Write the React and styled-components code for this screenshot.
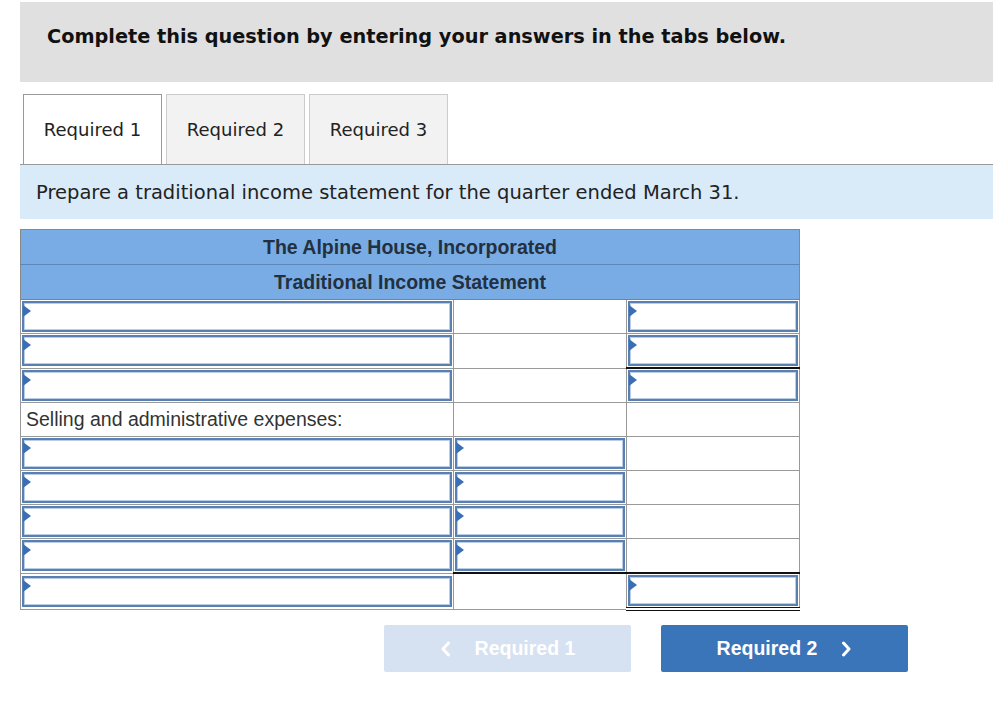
import styled, { createGlobalStyle } from 'styled-components'

const GlobalStyle = createGlobalStyle`
  html, body {
    margin: 0;
    padding: 0;
    background: #fff;
  }
  body {
    font-family: "DejaVu Sans", Verdana, sans-serif;
    color: #222;
  }
`

const Page = styled.div`
  width: 993px;
  padding-top: 2px;
  padding-left: 20px;
  box-sizing: border-box;
`

const Banner = styled.div`
  height: 80px;
  background: #e0e0e0;
  padding: 23px 0 0 27px;
  box-sizing: border-box;
  font-size: 19.3px;
  font-weight: bold;
  color: #111;
`

const TabBar = styled.div`
  display: flex;
  gap: 4px;
  margin-top: 12px;
  padding-left: 3px;
  border-bottom: 1px solid #999;
`

const Tab = styled.div`
  width: 139px;
  height: 70px;
  box-sizing: border-box;
  display: flex;
  align-items: center;
  justify-content: center;
  font-size: 18px;
  color: #222;
  border: 1px solid ${(p) => (p.$active ? '#999' : '#ccc')};
  border-bottom: none;
  background: ${(p) => (p.$active ? '#fff' : '#f2f2f2')};
  margin-bottom: ${(p) => (p.$active ? '-1px' : '0')};
`

const Prompt = styled.div`
  height: 54px;
  background: #d9ebf9;
  display: flex;
  align-items: center;
  padding-left: 16px;
  font-size: 19.5px;
  color: #222;
`

const Sheet = styled.table`
  margin-top: 10px;
  width: 779px;
  border-collapse: collapse;
  table-layout: fixed;
  font-family: "Liberation Sans", Arial, sans-serif;
  border: 1px solid #888;
`

const HeadCell = styled.th`
  background: #79ace4;
  color: #22303f;
  font-size: 19.5px;
  font-weight: bold;
  height: 34px;
  padding: 0;
  border-bottom: 1px solid #5f87b5;
  text-align: center;
`

const Cell = styled.td`
  height: 34px;
  box-sizing: border-box;
  padding: 1px;
  border: 1px solid #999;
  font-size: 19.5px;
  color: #333;
  vertical-align: middle;
  border-top: ${(p) => (p.$rule ? '2px solid #111' : '1px solid #999')};
  border-bottom: ${(p) => (p.$double ? '4px double #111' : '1px solid #999')};
`

const Label = styled.span`
  padding-left: 4px;
`

const InputWrap = styled.div`
  position: relative;
  height: 31px;
  box-sizing: border-box;
  border: 2px solid #5a80b2;
  box-shadow: inset 0 0 0 1px #b9cde6;
  background: #fff;
`

const Marker = styled.span`
  position: absolute;
  left: -1px;
  top: 2px;
  width: 0;
  height: 0;
  border-top: 6px solid transparent;
  border-bottom: 6px solid transparent;
  border-left: 8px solid #3a6fb8;
`

const Field = styled.input`
  width: 100%;
  height: 100%;
  border: none;
  outline: none;
  background: transparent;
  box-sizing: border-box;
  padding: 0 6px;
  font: inherit;
`

const Nav = styled.div`
  display: flex;
  gap: 30px;
  margin-top: 14px;
  padding-left: 364px;
`

const NavButton = styled.button`
  width: 247px;
  height: 47px;
  border: none;
  border-radius: 2px;
  background: ${(p) => (p.$disabled ? '#d6e2f1' : '#3a75ba')};
  color: #fff;
  font-family: "Liberation Sans", Arial, sans-serif;
  font-size: 19.5px;
  font-weight: bold;
  display: flex;
  align-items: center;
  justify-content: center;
  gap: 24px;
  cursor: ${(p) => (p.$disabled ? 'default' : 'pointer')};
`

function Chevron({ dir }) {
  const d = dir === 'left' ? 'M8.5 2 L3 8 L8.5 14' : 'M2.5 2 L8 8 L2.5 14'
  return (
    <svg width="11" height="16" viewBox="0 0 11 16">
      <path d={d} fill="none" stroke="#fff" strokeWidth="3" strokeLinecap="round" strokeLinejoin="round" />
    </svg>
  )
}

function Input() {
  return (
    <InputWrap>
      <Marker />
      <Field />
    </InputWrap>
  )
}

// which columns hold an input on each row
const rows = [
  { cols: [1, 0, 1] },
  { cols: [1, 0, 1] },
  { cols: [1, 0, 1], rule: [false, false, true] },
  { label: 'Selling and administrative expenses:', cols: [0, 0, 0] },
  { cols: [1, 1, 0] },
  { cols: [1, 1, 0] },
  { cols: [1, 1, 0] },
  { cols: [1, 1, 0] },
  { cols: [1, 0, 1], rule: [false, true, true], double: [false, false, true] },
]

export default function App() {
  return (
    <>
      <GlobalStyle />
      <Page>
        <Banner>Complete this question by entering your answers in the tabs below.</Banner>
        <TabBar>
          <Tab $active>Required 1</Tab>
          <Tab>Required 2</Tab>
          <Tab>Required 3</Tab>
        </TabBar>
        <Prompt>Prepare a traditional income statement for the quarter ended March 31.</Prompt>
        <Sheet>
          <colgroup>
            <col style={{ width: 433 }} />
            <col style={{ width: 173 }} />
            <col style={{ width: 173 }} />
          </colgroup>
          <thead>
            <tr>
              <HeadCell colSpan={3}>The Alpine House, Incorporated</HeadCell>
            </tr>
            <tr>
              <HeadCell colSpan={3}>Traditional Income Statement</HeadCell>
            </tr>
          </thead>
          <tbody>
            {rows.map((r, i) => (
              <tr key={i}>
                {r.cols.map((c, j) => (
                  <Cell key={j} $rule={r.rule && r.rule[j]} $double={r.double && r.double[j]}>
                    {c ? <Input /> : j === 0 && r.label ? <Label>{r.label}</Label> : null}
                  </Cell>
                ))}
              </tr>
            ))}
          </tbody>
        </Sheet>
        <Nav>
          <NavButton $disabled>
            <Chevron dir="left" />
            Required 1
          </NavButton>
          <NavButton>
            Required 2
            <Chevron dir="right" />
          </NavButton>
        </Nav>
      </Page>
    </>
  )
}
